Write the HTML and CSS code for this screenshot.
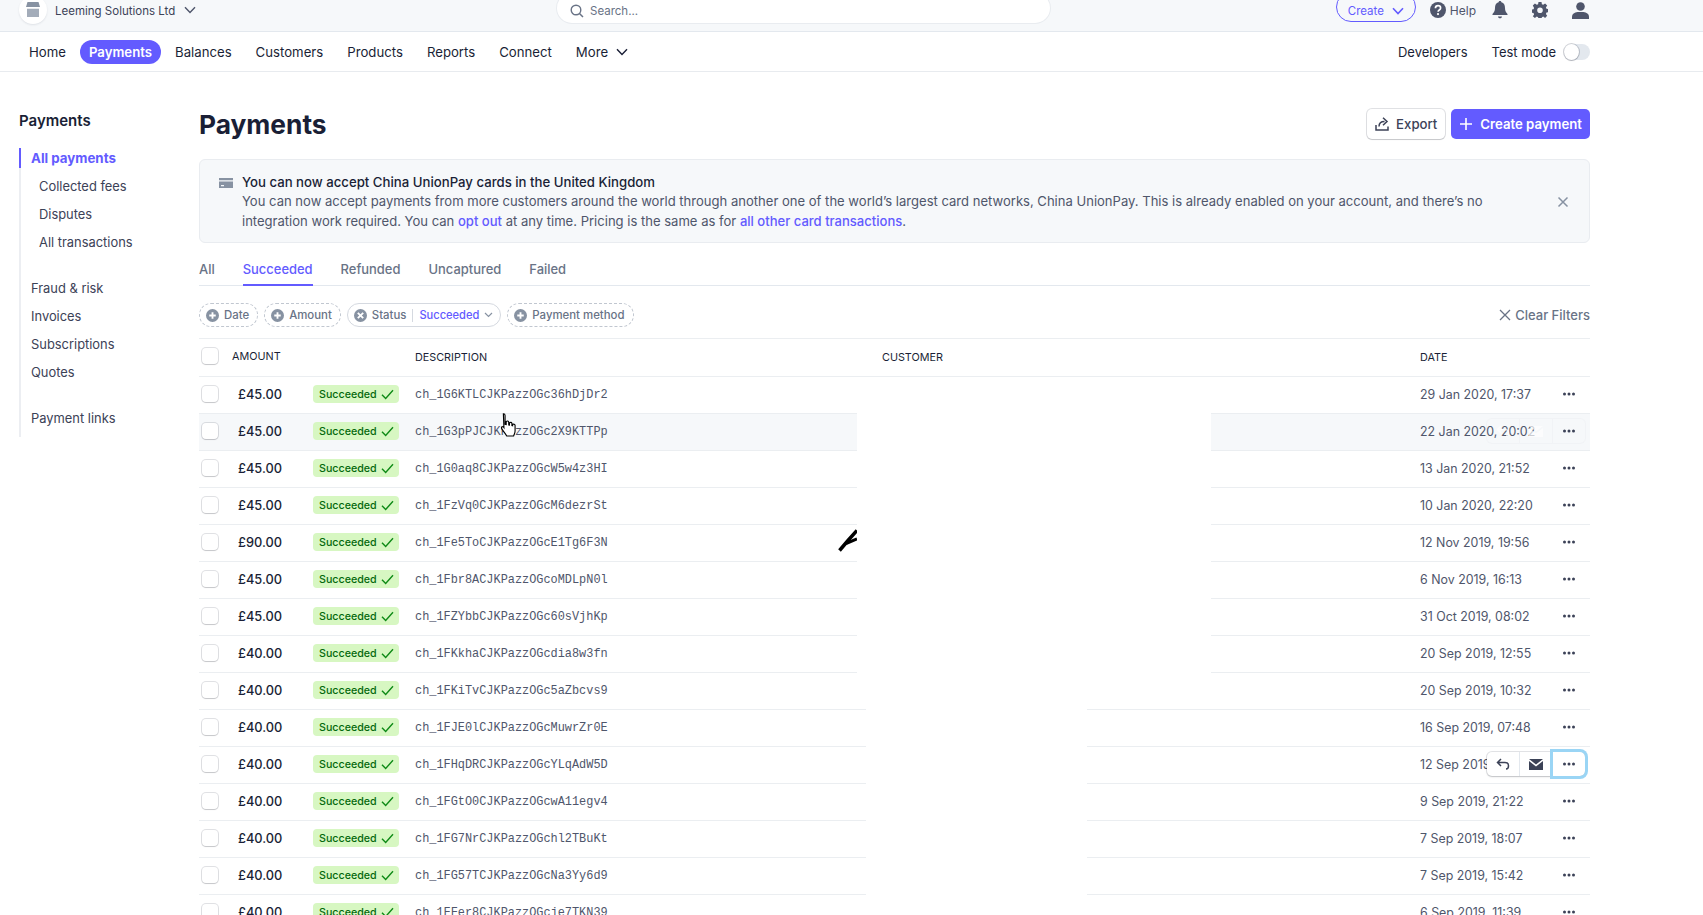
FILE: index.html
```html
<!DOCTYPE html>
<html lang="en">
<head>
  <meta charset="UTF-8">
  <title>Payments</title>
  <link rel="stylesheet" href="styles.css">
</head>
<body>
  <svg class="sprites" width="0" height="0">
    <symbol id="check" viewBox="0 0 14 12"><path d="M1 6.200 5 10.400 13 1.400" fill="none" stroke="#0e8a16" stroke-width="1.500"/></symbol>
    <symbol id="dots" viewBox="0 0 14 4"><circle cx="2.500" cy="2" r="1.500"/><circle cx="7" cy="2" r="1.500"/><circle cx="11.500" cy="2" r="1.500"/></symbol>
    <symbol id="plus-circle" viewBox="0 0 14 14"><path fill-rule="evenodd" d="M7 0a7 7 0 1 1 0 14A7 7 0 0 1 7 0Zm-1 3.500v2.500H3.500v2H6v2.500h2V8h2.500V6H8V3.500Z"/></symbol>
    <symbol id="x-circle" viewBox="0 0 14 14"><path fill-rule="evenodd" d="M7 0a7 7 0 1 1 0 14A7 7 0 0 1 7 0ZM4.800 3.400 3.400 4.800 5.600 7 3.400 9.200l1.400 1.400L7 8.400l2.200 2.200 1.400-1.400L8.400 7l2.200-2.200-1.400-1.400L7 5.600Z"/></symbol>
  </svg>

  <header class="topbar">
    <div class="account">
      <span class="account-logo">
        <svg width="16" height="16" viewBox="0 0 16 16"><path d="M2.500 0h11l1.500 5H1Z" fill="#8792a2"/><path d="M2 6.500h12V15H2Z" fill="#a3acb9"/><path d="M2 5h12v1.500H2Z" fill="#fff"/></svg>
      </span>
      <span class="account-name">Leeming Solutions Ltd</span>
      <svg class="chevron" width="12" height="8" viewBox="0 0 12 8"><path d="M1 1.200 6 6.500 11 1.200" fill="none" stroke="#4f566b" stroke-width="1.400"/></svg>
    </div>
    <div class="search">
      <svg width="14" height="14" viewBox="0 0 14 14"><circle cx="6" cy="6" r="4.800" fill="none" stroke="#697386" stroke-width="1.400"/><path d="M9.500 9.500 13 13" stroke="#697386" stroke-width="1.500"/></svg>
      <span>Search...</span>
    </div>
    <div class="top-actions">
      <button class="create-pill">Create
        <svg width="12" height="8" viewBox="0 0 12 8"><path d="M1 1.200 6 6.500 11 1.200" fill="none" stroke="#635bff" stroke-width="1.600"/></svg>
      </button>
      <span class="help">
        <svg width="16" height="16" viewBox="0 0 16 16"><circle cx="8" cy="8" r="8" fill="#4f566b"/><path d="M5.400 6.200C5.500 4.600 6.600 3.700 8 3.700c1.500 0 2.600 1 2.600 2.300 0 2-2.500 2-2.500 3.700" fill="none" stroke="#fff" stroke-width="1.700"/><circle cx="8" cy="12.100" r="1.100" fill="#fff"/></svg>
        Help
      </span>
      <svg class="top-icon bell" width="16" height="18" viewBox="0 0 16 18"><path d="M8 0c.8 0 1.300.5 1.400 1.200C12 1.800 13 4 13 7c0 3 1 4.500 2.500 6v1H.5v-1C2 11.500 3 10 3 7c0-3 1-5.200 3.600-5.800C6.700.5 7.200 0 8 0ZM6 15.500h4c0 1-.9 1.800-2 1.800s-2-.8-2-1.800Z" fill="#4f566b"/></svg>
      <svg class="top-icon" width="16" height="16" viewBox="0 0 16 16"><path fill-rule="evenodd" d="M6.500 0h3l.4 2.200 1.300.6L13.100 1.500l2.100 2.100-1.300 1.900.6 1.300 2.200.4v3l-2.200.4-.6 1.300 1.300 1.900-2.100 2.100-1.900-1.300-1.300.6-.4 2.200h-3l-.4-2.200-1.300-.6-1.900 1.300L.8 14.300l1.300-1.900-.6-1.300L-.7 10.700v-3l2.200-.4.600-1.300L.8 3.600l2.100-2.100 1.900 1.300 1.300-.6ZM8 5.400a2.800 2.800 0 1 0 0 5.600 2.800 2.800 0 0 0 0-5.600Z" fill="#4f566b"/></svg>
      <svg class="top-icon" width="17" height="17" viewBox="0 0 17 17"><circle cx="8.500" cy="4.500" r="4.300" fill="#4f566b"/><path d="M0 17v-2.500c0-2.500 2.500-4 5.500-4.500h6c3 .5 5.500 2 5.500 4.500V17Z" fill="#4f566b"/></svg>
    </div>
  </header>

  <nav class="mainnav">
    <a>Home</a>
    <a class="active">Payments</a>
    <a>Balances</a>
    <a>Customers</a>
    <a>Products</a>
    <a>Reports</a>
    <a>Connect</a>
    <a class="more">More
      <svg width="12" height="8" viewBox="0 0 12 8"><path d="M1 1.200 6 6.500 11 1.200" fill="none" stroke="#1a1f36" stroke-width="1.400"/></svg>
    </a>
    <div class="nav-right">
      <a>Developers</a>
      <a class="test-mode">Test mode <span class="toggle"></span></a>
    </div>
  </nav>

  <div class="layout">
    <aside class="sidebar">
      <h2>Payments</h2>
      <ul class="side-list">
        <li class="current">All payments</li>
        <li class="sub">Collected fees</li>
        <li class="sub">Disputes</li>
        <li class="sub">All transactions</li>
        <li class="spaced">Fraud &amp; risk</li>
        <li>Invoices</li>
        <li>Subscriptions</li>
        <li>Quotes</li>
        <li class="spaced">Payment links</li>
      </ul>
    </aside>

    <main class="content">
      <div class="page-head">
        <h1>Payments</h1>
        <div class="head-buttons">
          <button class="btn">
            <svg width="14" height="14" viewBox="0 0 14 14"><path d="M1 8v5h12V9.500" fill="none" stroke="#3c4257" stroke-width="1.500"/><path d="M4 9.500C4 6 6 4.500 9.500 4.500M8 .8 12 4.500 8 8.200" fill="none" stroke="#3c4257" stroke-width="1.500"/></svg>
            Export
          </button>
          <button class="btn btn-primary">
            <svg width="14" height="14" viewBox="0 0 14 14"><path d="M7 1v12M1 7h12" stroke="#fff" stroke-width="1.600"/></svg>
            Create payment
          </button>
        </div>
      </div>

      <section class="banner">
        <svg class="banner-icon" width="14" height="10" viewBox="0 0 14 10"><path fill-rule="evenodd" d="M0 0h14v2.200H0Zm0 3.600h14V10H0Zm2 3.400v1.200h3V7Z" fill="#8792a2"/></svg>
        <div class="banner-text">
          <strong>You can now accept China UnionPay cards in the United Kingdom</strong>
          <p>You can now accept payments from more customers around the world through another one of the world’s largest card networks, China UnionPay. This is already enabled on your account, and there’s no integration work required. You can <a>opt out</a> at any time. Pricing is the same as for <a>all other card transactions</a>.</p>
        </div>
        <svg class="banner-close" width="12" height="12" viewBox="0 0 12 12"><path d="M1.500 1.500l9 9M10.500 1.500l-9 9" stroke="#8792a2" stroke-width="1.500"/></svg>
      </section>

      <div class="tabs">
        <a>All</a>
        <a class="active">Succeeded</a>
        <a>Refunded</a>
        <a>Uncaptured</a>
        <a>Failed</a>
      </div>

      <div class="filters">
        <span class="chip"><svg width="13" height="13"><use href="#plus-circle"/></svg>Date</span>
        <span class="chip"><svg width="13" height="13"><use href="#plus-circle"/></svg>Amount</span>
        <span class="chip chip-set">
          <svg width="13" height="13"><use href="#x-circle"/></svg>Status<i class="chip-sep"></i><b>Succeeded</b>
          <svg width="9" height="6" viewBox="0 0 9 6"><path d="M1 1l3.500 3.500L8 1" fill="none" stroke="#8792a2" stroke-width="1.200"/></svg>
        </span>
        <span class="chip"><svg width="13" height="13"><use href="#plus-circle"/></svg>Payment method</span>
        <span class="clear-filters">
          <svg width="12" height="12" viewBox="0 0 12 12"><path d="M1 1l10 10M11 1 1 11" stroke="#697386" stroke-width="1.300"/></svg>
          Clear Filters
        </span>
      </div>

      <div class="table-head row-grid">
        <span><i class="checkbox"></i></span>
        <span>AMOUNT</span>
        <span></span>
        <span class="head-low">DESCRIPTION</span>
        <span class="head-low">CUSTOMER</span>
        <span class="head-low">DATE</span>
        <span></span>
      </div>

      <div class="table-body">
        <div class="row row-grid"><span><i class="checkbox"></i></span><span class="amount">£45.00</span><span><em class="badge">Succeeded <svg width="13" height="11"><use href="#check"/></svg></em></span><code>ch_1G6KTLCJKPazzOGc36hDjDr2</code><span></span><span class="date">29 Jan 2020, 17:37</span><svg class="dots" width="14" height="4"><use href="#dots"/></svg></div>
        <div class="row row-grid hovered"><span><i class="checkbox"></i></span><span class="amount">£45.00</span><span><em class="badge">Succeeded <svg width="13" height="11"><use href="#check"/></svg></em></span><code>ch_1G3pPJCJKPazzOGc2X9KTTPp</code><span></span><span class="date">22 Jan 2020, 20:02</span><svg class="dots" width="14" height="4"><use href="#dots"/></svg>
          <div class="row-actions faded">
            <span><svg width="14" height="12" viewBox="0 0 14 12"><path d="M5 1 1.500 4.500 5 8M1.500 4.500H9c2.500 0 3.500 1.500 3.500 3.200S11.500 11 10 11" fill="none" stroke="#fff" stroke-width="1.500"/></svg></span>
            <span><svg width="14" height="11" viewBox="0 0 14 11"><path d="M0 0h14L7 5.500ZM0 2l7 5.500L14 2v9H0Z" fill="#fff"/></svg></span>
            <span></span>
          </div>
        </div>
        <div class="row row-grid"><span><i class="checkbox"></i></span><span class="amount">£45.00</span><span><em class="badge">Succeeded <svg width="13" height="11"><use href="#check"/></svg></em></span><code>ch_1G0aq8CJKPazzOGcW5w4z3HI</code><span></span><span class="date">13 Jan 2020, 21:52</span><svg class="dots" width="14" height="4"><use href="#dots"/></svg></div>
        <div class="row row-grid"><span><i class="checkbox"></i></span><span class="amount">£45.00</span><span><em class="badge">Succeeded <svg width="13" height="11"><use href="#check"/></svg></em></span><code>ch_1FzVq0CJKPazzOGcM6dezrSt</code><span></span><span class="date">10 Jan 2020, 22:20</span><svg class="dots" width="14" height="4"><use href="#dots"/></svg></div>
        <div class="row row-grid"><span><i class="checkbox"></i></span><span class="amount">£90.00</span><span><em class="badge">Succeeded <svg width="13" height="11"><use href="#check"/></svg></em></span><code>ch_1Fe5ToCJKPazzOGcE1Tg6F3N</code><span></span><span class="date">12 Nov 2019, 19:56</span><svg class="dots" width="14" height="4"><use href="#dots"/></svg></div>
        <div class="row row-grid"><span><i class="checkbox"></i></span><span class="amount">£45.00</span><span><em class="badge">Succeeded <svg width="13" height="11"><use href="#check"/></svg></em></span><code>ch_1Fbr8ACJKPazzOGcoMDLpN0l</code><span></span><span class="date">6 Nov 2019, 16:13</span><svg class="dots" width="14" height="4"><use href="#dots"/></svg></div>
        <div class="row row-grid"><span><i class="checkbox"></i></span><span class="amount">£45.00</span><span><em class="badge">Succeeded <svg width="13" height="11"><use href="#check"/></svg></em></span><code>ch_1FZYbbCJKPazzOGc60sVjhKp</code><span></span><span class="date">31 Oct 2019, 08:02</span><svg class="dots" width="14" height="4"><use href="#dots"/></svg></div>
        <div class="row row-grid"><span><i class="checkbox"></i></span><span class="amount">£40.00</span><span><em class="badge">Succeeded <svg width="13" height="11"><use href="#check"/></svg></em></span><code>ch_1FKkhaCJKPazzOGcdia8w3fn</code><span></span><span class="date">20 Sep 2019, 12:55</span><svg class="dots" width="14" height="4"><use href="#dots"/></svg></div>
        <div class="row row-grid"><span><i class="checkbox"></i></span><span class="amount">£40.00</span><span><em class="badge">Succeeded <svg width="13" height="11"><use href="#check"/></svg></em></span><code>ch_1FKiTvCJKPazzOGc5aZbcvs9</code><span></span><span class="date">20 Sep 2019, 10:32</span><svg class="dots" width="14" height="4"><use href="#dots"/></svg></div>
        <div class="row row-grid"><span><i class="checkbox"></i></span><span class="amount">£40.00</span><span><em class="badge">Succeeded <svg width="13" height="11"><use href="#check"/></svg></em></span><code>ch_1FJE0lCJKPazzOGcMuwrZr0E</code><span></span><span class="date">16 Sep 2019, 07:48</span><svg class="dots" width="14" height="4"><use href="#dots"/></svg></div>
        <div class="row row-grid"><span><i class="checkbox"></i></span><span class="amount">£40.00</span><span><em class="badge">Succeeded <svg width="13" height="11"><use href="#check"/></svg></em></span><code>ch_1FHqDRCJKPazzOGcYLqAdW5D</code><span></span><span class="date">12 Sep 2019</span><svg class="dots" width="14" height="4"><use href="#dots"/></svg>
          <div class="row-actions">
            <span><svg width="14" height="12" viewBox="0 0 14 12"><path d="M5 1 1.500 4.500 5 8M1.500 4.500H9c2.500 0 3.500 1.500 3.500 3.200S11.500 11 10 11" fill="none" stroke="#3c4257" stroke-width="1.500"/></svg></span>
            <span><svg width="14" height="11" viewBox="0 0 14 11"><path d="M0 0h14L7 5.500ZM0 2l7 5.500L14 2v9H0Z" fill="#3c4257"/></svg></span>
            <span class="focused"><svg width="14" height="4"><use href="#dots"/></svg></span>
          </div>
        </div>
        <div class="row row-grid"><span><i class="checkbox"></i></span><span class="amount">£40.00</span><span><em class="badge">Succeeded <svg width="13" height="11"><use href="#check"/></svg></em></span><code>ch_1FGtO0CJKPazzOGcwA11egv4</code><span></span><span class="date">9 Sep 2019, 21:22</span><svg class="dots" width="14" height="4"><use href="#dots"/></svg></div>
        <div class="row row-grid"><span><i class="checkbox"></i></span><span class="amount">£40.00</span><span><em class="badge">Succeeded <svg width="13" height="11"><use href="#check"/></svg></em></span><code>ch_1FG7NrCJKPazzOGchl2TBuKt</code><span></span><span class="date">7 Sep 2019, 18:07</span><svg class="dots" width="14" height="4"><use href="#dots"/></svg></div>
        <div class="row row-grid"><span><i class="checkbox"></i></span><span class="amount">£40.00</span><span><em class="badge">Succeeded <svg width="13" height="11"><use href="#check"/></svg></em></span><code>ch_1FG57TCJKPazzOGcNa3Yy6d9</code><span></span><span class="date">7 Sep 2019, 15:42</span><svg class="dots" width="14" height="4"><use href="#dots"/></svg></div>
        <div class="row row-grid"><span><i class="checkbox"></i></span><span class="amount">£40.00</span><span><em class="badge">Succeeded <svg width="13" height="11"><use href="#check"/></svg></em></span><code>ch_1FFer8CJKPazzOGcje7TKN39</code><span></span><span class="date">6 Sep 2019, 11:39</span><svg class="dots" width="14" height="4"><use href="#dots"/></svg></div>

        <!-- blanked out customer column -->
        <div class="mask mask-upper"></div>
        <div class="mask mask-lower"></div>
        <svg class="scribble" width="19" height="23" viewBox="0 0 19 23"><path d="M1.500 21.500 10 11.500 19 1.500" fill="none" stroke="#000" stroke-width="3.500"/><path d="M8 14.500 19 10" fill="none" stroke="#000" stroke-width="3"/></svg>
      </div>
    </main>
  </div>

  <svg class="cursor" width="18" height="27" viewBox="0 0 16 24"><path d="M3 1.500c1 0 1.500.6 1.500 1.500v8l1 .2V8.500c1-.8 2-.6 2.200.3l.1 2.700.6.1V9.600c1-.7 2-.5 2.200.5v2l.6.100v-1.200c1-.5 2-.2 2.200.8v5c0 2-.8 3-1.300 4.500H6c-1-1.800-3-4-4.500-6.500-.6-1.200.6-2.200 1.700-1.300l.3.4Z" fill="#fff" stroke="#000" stroke-width="1"/></svg>
</body>
</html>
```

FILE: styles.css
```css
* {
  box-sizing: border-box;
}
html, body {
  height: 915px;
  overflow: hidden;
}
body {
  margin: 0;
  position: relative;
  background: #fff;
  color: #1a1f36;
  font-family: Inter, "Noto Sans", sans-serif;
  font-size: 13px;
}
.sprites {
  position: absolute;
}
button {
  font-family: inherit;
}
a {
  color: inherit;
}

/* top bar */
.topbar {
  height: 32px;
  background: #f6f8fa;
  border-bottom: 1px solid #e3e8ee;
  display: flex;
  align-items: flex-start;
  padding: 0 114px 0 19px;
  position: relative;
}
.account {
  display: flex;
  align-items: center;
  width: 538px;
  margin-top: -5px;
  height: 30px;
  flex: none;
}
.account-logo {
  width: 28px;
  height: 28px;
  border-radius: 50%;
  background: #fff;
  box-shadow: 0 1px 2px rgba(60,66,87,.12);
  display: flex;
  align-items: center;
  justify-content: center;
  margin-right: 8px;
  flex: none;
}
.account-name {
  padding-top: 2px;
  font-size: 11.5px;
  color: #3c4257;
  margin-right: 9px;
}
.search {
  width: 493px;
  height: 30px;
  margin-top: -7px;
  padding: 5px 14px 0 13px;
  flex: none;
  background: #fff;
  border-radius: 15px;
  box-shadow: 0 0 0 1px #e9ecf0;
  display: flex;
  align-items: center;
  gap: 6px;
  font-size: 11.5px;
  color: #697386;
}
.top-actions {
  margin-left: auto;
  display: flex;
  align-items: center;
  height: 20px;
}
.create-pill {
  width: 80px;
  height: 30px;
  margin-top: -6px;
  padding: 8px 0 0;
  border: 1px solid #635bff;
  border-radius: 15px;
  background: #fff0;
  color: #635bff;
  font-size: 11.5px;
  display: flex;
  align-items: center;
  justify-content: center;
  gap: 8px;
}
.help {
  display: flex;
  align-items: center;
  gap: 4px;
  font-size: 12px;
  color: #4f566b;
  margin-left: 14px;
}
.top-icon {
  margin-left: 24px;
  flex: none;
}
.top-icon.bell {
  margin-left: 16px;
}

/* main nav */
.mainnav {
  height: 40px;
  border-bottom: 1px solid #e8ebef;
  display: flex;
  align-items: center;
  padding: 1px 114px 0 29px;
  font-size: 13.200px;
  gap: 24px;
}
.mainnav .active {
  background: #635bff;
  color: #fff;
  font-weight: 600;
  border-radius: 12px;
  padding: 4px 9px;
  line-height: 16px;
  margin: 0 -10px 0 -10px;
}
.more {
  display: flex;
  align-items: center;
  gap: 8px;
}
.nav-right {
  margin-left: auto;
  margin-right: -1px;
  display: flex;
  align-items: center;
  gap: 24px;
  font-size: 13px;
}
.test-mode {
  display: flex;
  align-items: center;
  gap: 8px;
}
.toggle {
  width: 26px;
  height: 16px;
  border-radius: 8px;
  background: #e3e8ee;
  position: relative;
}
.toggle::after {
  content: "";
  position: absolute;
  left: 0;
  top: 0;
  width: 15px;
  height: 16px;
  border-radius: 50%;
  background: #fff;
  box-shadow: 0 0 0 1px rgba(60,66,87,.25), 0 1px 1px rgba(60,66,87,.2);
}

/* page */
.layout {
  display: flex;
  padding-top: 37px;
}
.sidebar {
  width: 199px;
  flex: none;
  padding-left: 19px;
}
.sidebar h2 {
  margin: 1px 0 17px;
  font-size: 15px;
  font-weight: 600;
  line-height: 22px;
}
.side-list {
  list-style: none;
  margin: 0;
  padding: 0;
  border-left: 2px solid #eceef2;
  width: 160px;
}
.side-list li {
  height: 28px;
  line-height: 20px;
  padding-left: 10px;
  font-size: 12.900px;
  color: #3c4257;
}
.side-list .sub {
  padding-left: 18px;
}
.side-list .current {
  color: #635bff;
  font-size: 13.300px;
  font-weight: 700;
  line-height: 18px;
  position: relative;
}
.side-list .current::before {
  content: "";
  position: absolute;
  left: -2px;
  top: -1px;
  width: 2px;
  height: 20px;
  background: #635bff;
}
.side-list .spaced {
  margin-top: 18px;
}
.content {
  width: 1391px;
  flex: none;
}
.page-head {
  display: flex;
  justify-content: space-between;
  align-items: center;
  height: 30px;
  margin-bottom: 20px;
}
h1 {
  margin: 2px 0 0;
  font-size: 26.300px;
  font-weight: 700;
  line-height: 32px;
}
.head-buttons {
  display: flex;
  gap: 6px;
}
.btn {
  height: 30px;
  border: 0;
  border-radius: 5px;
  background: #fff;
  color: #3c4257;
  font-size: 13.200px;
  font-weight: 500;
  padding: 0 8px;
  display: flex;
  align-items: center;
  gap: 7px;
  box-shadow: 0 0 0 1px rgba(60,66,87,.16), 0 1px 1px rgba(0,0,0,.12);
}
.btn-primary {
  background: #635bff;
  color: #fff;
  font-weight: 600;
  box-shadow: none;
}

/* banner */
.banner {
  height: 84px;
  background: #f6f8fa;
  border: 1px solid #e9ecf0;
  border-radius: 6px;
  display: flex;
  padding: 13px 20px 0 19px;
  font-size: 13px;
  line-height: 19px;
}
.banner-icon {
  flex: none;
  margin: 5px 9px 0 0;
}
.banner-text {
  width: 1270px;
}
.banner-text strong {
  font-size: 13.200px;
  font-weight: 500;
}
.banner-text p {
  margin: 0;
  font-size: 13.050px;
  line-height: 19.500px;
  color: #4f566b;
}
.banner-text a {
  color: #635bff;
  font-weight: 500;
}
.banner-close {
  margin: 23px 0 0 auto;
}

/* tabs */
.tabs {
  height: 43px;
  border-bottom: 1px solid #e3e8ee;
  display: flex;
  align-items: flex-end;
  gap: 28px;
  font-size: 12.950px;
  font-weight: 500;
  color: #697386;
}
.tabs a {
  line-height: 18px;
  padding-bottom: 6px;
  margin-bottom: -1px;
  border-bottom: 2px solid transparent;
}
.tabs .active {
  color: #635bff;
  border-color: #635bff;
}

/* filters */
.filters {
  height: 53px;
  border-bottom: 1px solid #ebeef1;
  display: flex;
  align-items: flex-start;
  padding-top: 17px;
  gap: 6px;
}
.chip {
  height: 24px;
  border: 1px dashed #c1c7d0;
  border-radius: 12px;
  padding: 0 8px 0 6px;
  display: flex;
  align-items: center;
  gap: 5px;
  font-size: 11.400px;
  font-weight: 500;
  color: #697386;
  fill: #8792a2;
}
.chip-set {
  border: 1px solid #d5d9e0;
  padding-right: 7px;
}
.chip-set b {
  font-size: 11.100px;
  font-weight: 500;
  color: #635bff;
}
.chip-sep {
  width: 1px;
  height: 13px;
  background: #d5d9e0;
  margin: 0 1px;
}
.clear-filters {
  margin-left: auto;
  display: flex;
  align-items: center;
  gap: 4px;
  font-size: 13px;
  font-weight: 500;
  color: #697386;
  height: 24px;
}

/* table */
.row-grid {
  display: grid;
  grid-template-columns: 33px 81px 102px 467px 538px 130px 40px;
  align-items: center;
}
.table-head {
  height: 38px;
  padding-bottom: 3px;
  border-bottom: 1px solid #ebeef1;
  font-size: 10.800px;
  font-weight: 400;
}
.head-low {
  padding-top: 2px;
}
.table-body {
  position: relative;
  height: 560px;
}
.row {
  height: 37px;
  padding-bottom: 2px;
  border-bottom: 1px solid #ebeef1;
  position: relative;
  font-size: 12.800px;
}
.row.hovered {
  background: #f6f8fa;
}
.checkbox {
  display: block;
  width: 16px;
  height: 16px;
  margin-left: 3px;
  border-radius: 4px;
  background: #fff;
  box-shadow: 0 0 0 1px rgba(60,66,87,.16), 0 1px 1px rgba(0,0,0,.12);
}
.amount {
  padding-left: 6px;
  font-weight: 500;
}
.badge {
  display: inline-flex;
  align-items: center;
  gap: 4px;
  height: 18px;
  width: 86px;
  padding: 0 4px 0 6px;
  border-radius: 4px;
  background: #d7f7c2;
  color: #05690d;
  font-style: normal;
  font-size: 10.700px;
  font-weight: 500;
  vertical-align: middle;
}
.badge svg {
  flex: none;
}
code {
  padding-top: 2px;
  font-family: "Liberation Mono", monospace;
  font-size: 11.900px;
  color: #4f566b;
}
.date {
  font-size: 12.400px;
  color: #4f566b;
  white-space: nowrap;
}
.dots {
  justify-self: center;
  margin-left: -2px;
  fill: #3c4257;
}
.row-actions {
  position: absolute;
  left: 1288px;
  top: 5px;
  width: 98px;
  height: 24px;
  display: flex;
  background: #fff;
  border-radius: 5px;
  box-shadow: 0 0 0 1px rgba(60,66,87,.14), 0 1px 2px rgba(0,0,0,.16);
  fill: #3c4257;
}
.row-actions span {
  flex: 1;
  display: flex;
  align-items: center;
  justify-content: center;
  border-left: 1px solid #e3e8ee;
}
.row-actions span:first-child {
  border-left: 0;
}
.row-actions .focused {
  border-radius: 0 5px 5px 0;
  box-shadow: 0 0 0 3px #9ad5f5;
  border-left: 0;
}
.row-actions.faded {
  background: none;
  box-shadow: 0 0 0 1px rgba(60,66,87,.03);
  opacity: .7;
}
.row-actions.faded span {
  border-left-color: rgba(60,66,87,.03);
}
.mask {
  position: absolute;
  background: #fff;
}
.mask-upper {
  left: 658px;
  width: 354px;
  top: 0;
  height: 297px;
}
.mask-lower {
  left: 667px;
  width: 221px;
  top: 297px;
  height: 263px;
}
.scribble {
  position: absolute;
  left: 639px;
  top: 152px;
}
.cursor {
  position: absolute;
  left: 500px;
  top: 412px;
}
```
